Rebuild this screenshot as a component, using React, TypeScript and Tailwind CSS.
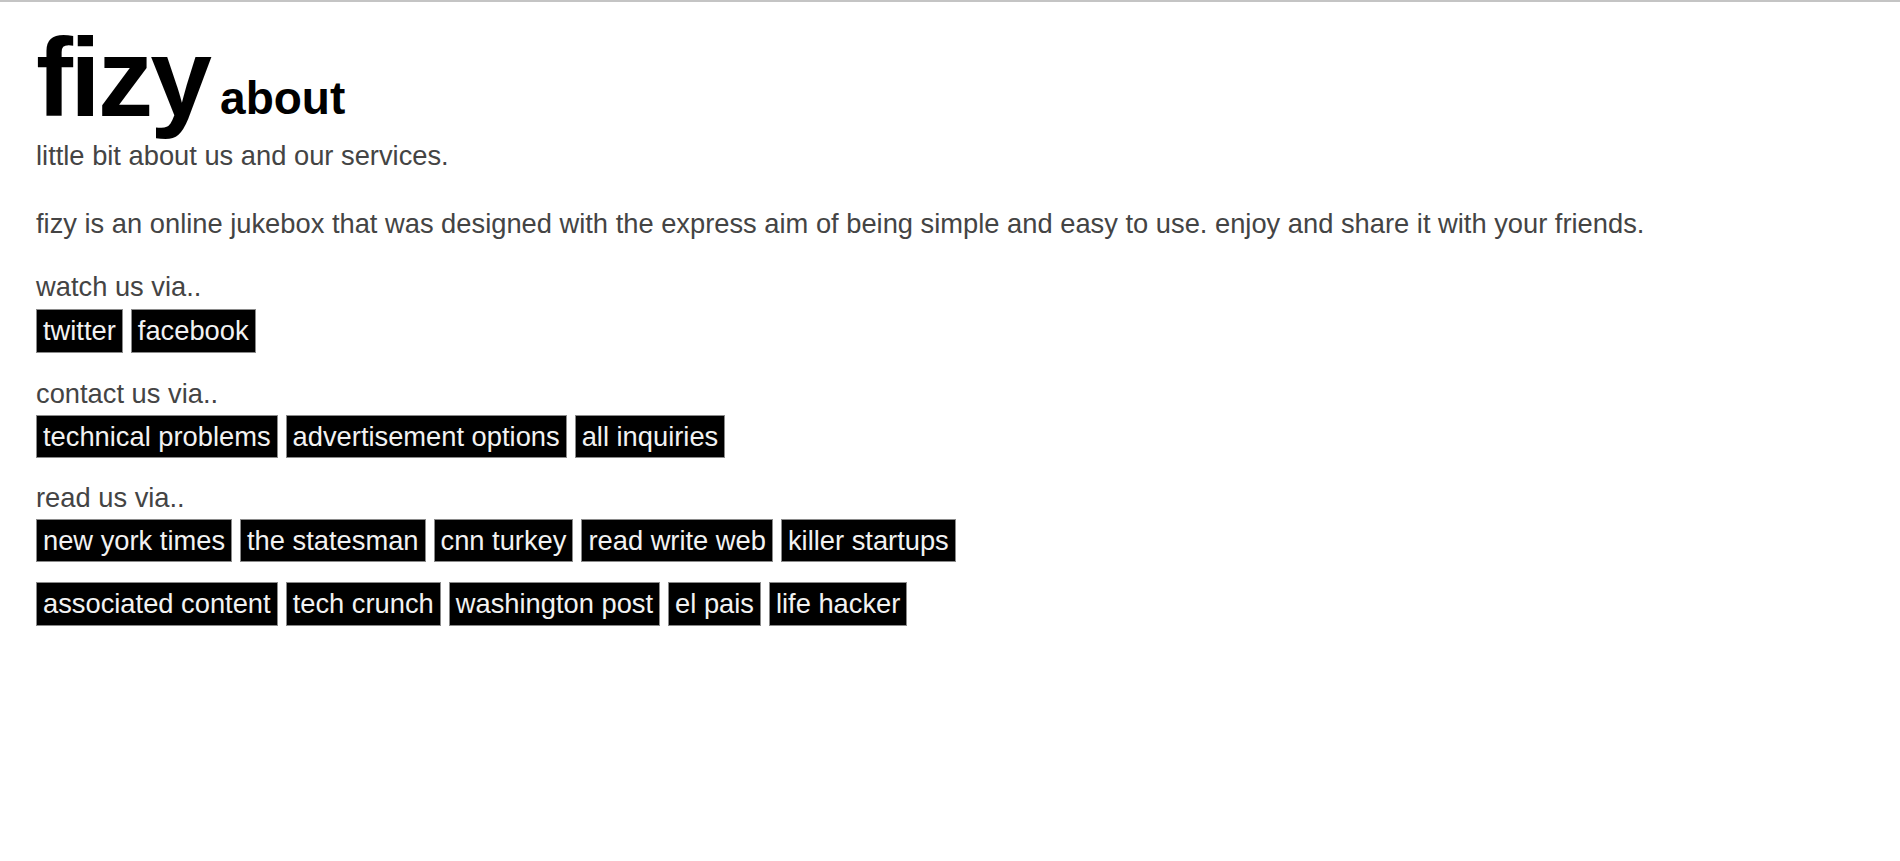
import React from "react";

const Btn = ({ children }: { children: React.ReactNode }) => (
  <a className="block bg-black text-[#f2f2f2] border border-[#8a8a8a] px-[6px] py-[5px] leading-[1.15] whitespace-nowrap cursor-pointer">
    {children}
  </a>
);

const Row = ({ items }: { items: string[] }) => (
  <div className="flex gap-[8px]">
    {items.map((t) => (
      <Btn key={t}>{t}</Btn>
    ))}
  </div>
);

export default function App() {
  return (
    <div
      className="min-h-[861px] bg-white border-t-2 border-[#c4c4c4] text-[#444] text-[27.3px] leading-[1.15]"
      style={{ fontFamily: '"Liberation Sans", Arial, Helvetica, sans-serif' }}
    >
      <div className="pt-[21px] px-[36px]">
        <div className="flex items-end h-[111px] leading-none text-black">
          <span className="text-[111px] font-bold tracking-[-3px]">fizy</span>
          <span className="text-[46px] font-bold ml-[11px] mb-[13px]">about</span>
        </div>
        <p className="mt-[6px]">little bit about us and our services.</p>
        <p className="mt-[37px]">
          fizy is an online jukebox that was designed with the express aim of being simple and easy to use. enjoy and share it with your friends.
        </p>

        <p className="mt-[31px]">watch us via..</p>
        <div className="mt-[7px]">
          <Row items={["twitter", "facebook"]} />
        </div>

        <p className="mt-[25px]">contact us via..</p>
        <div className="mt-[6px]">
          <Row items={["technical problems", "advertisement options", "all inquiries"]} />
        </div>

        <p className="mt-[24px]">read us via..</p>
        <div className="mt-[5px] flex flex-col gap-[20px]">
          <Row items={["new york times", "the statesman", "cnn turkey", "read write web", "killer startups"]} />
          <Row items={["associated content", "tech crunch", "washington post", "el pais", "life hacker"]} />
        </div>
      </div>
    </div>
  );
}
